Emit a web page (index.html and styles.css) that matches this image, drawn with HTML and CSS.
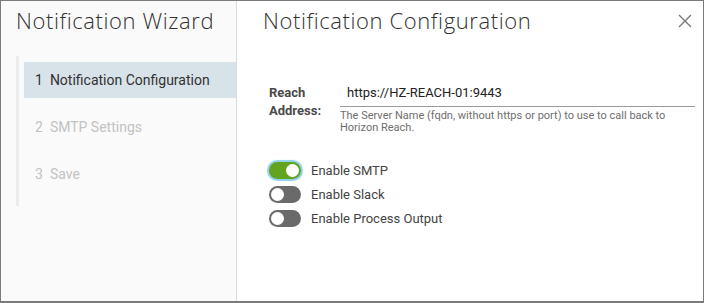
FILE: index.html
```html
<!DOCTYPE html>
<html lang="en">
<head>
  <meta charset="UTF-8">
  <title>Notification Wizard</title>
  <link rel="stylesheet" href="styles.css">
</head>
<body>

<div class="wizard">
  <div class="side">
    <h2 class="side-title">Notification Wizard</h2>
    <div class="steps">
      <div class="step active"><span class="num">1</span>Notification Configuration</div>
      <div class="step"><span class="num">2</span>SMTP Settings</div>
      <div class="step"><span class="num">3</span>Save</div>
    </div>
  </div>

  <div class="main">
    <div class="main-head">
      <h2 class="main-title">Notification Configuration</h2>
      <button class="close" aria-label="Close">
        <svg width="14" height="14" viewBox="0 0 14 14">
          <path d="M1 1 L13 13 M13 1 L1 13" stroke="#777" stroke-width="1.4" fill="none"/>
        </svg>
      </button>
    </div>

    <div class="field">
      <label class="field-label">Reach Address:</label>
      <div class="field-body">
        <input type="text" class="text-input" value="https://HZ-REACH-01:9443" />
        <div class="helper">The Server Name (fqdn, without https or port) to use to call back to Horizon Reach.</div>
      </div>
    </div>

    <div class="toggles">
      <div class="toggle-row"><span class="toggle on focus"></span>Enable SMTP</div>
      <div class="toggle-row"><span class="toggle"></span>Enable Slack</div>
      <div class="toggle-row"><span class="toggle"></span>Enable Process Output</div>
    </div>
  </div>
</div>

</body>
</html>
```

FILE: styles.css
```css
body {
  margin: 0;
  font-family: Roboto, "Liberation Sans", sans-serif;
  background: #fff;
}
.wizard {
  width: 704px;
  height: 303px;
  box-sizing: border-box;
  border: 1px solid #7b7b7b;
  border-bottom-width: 2px;
  display: flex;
}
.side {
  width: 235px;
  background: #fafafa;
  border-right: 1px solid #dcdcdc;
}
.side-title, .main-title {
  margin: 0;
  font-family: "Open Sans", sans-serif;
  font-weight: 300;
  font-size: 22px;
  letter-spacing: 0.6px;
  color: #313131;
  line-height: 26px;
}
.side-title {
  padding: 6px 0 0 15px;
}
.steps {
  margin: 23px 0 0 15px;
  border-left: 3px solid #ececec;
  padding: 6px 0 14px 5px;
}
.step {
  height: 36px;
  line-height: 36px;
  padding-left: 11px;
  margin-bottom: 11px;
  font-size: 14px;
  color: #c2c2c2;
}
.step:last-child { margin-bottom: 0; }
.step .num { margin-right: 7px; }
.step.active {
  background: #d8e3e9;
  color: #313131;
}
.main {
  flex: 1;
  padding: 0 0 0 26px;
}
.main-head {
  display: flex;
  justify-content: space-between;
  align-items: flex-start;
}
.main-title {
  padding-top: 6px;
}
.close {
  border: none;
  background: none;
  padding: 0;
  margin: 13px 11px 0 0;
  width: 14px;
  height: 14px;
  cursor: pointer;
}
.field {
  display: flex;
  margin: 51px 0 0 6px;
}
.field-label {
  width: 71px;
  font-size: 13px;
  font-weight: bold;
  color: #4a4a4a;
  line-height: 18px;
}
.field-body {
  flex: 1;
  margin-right: 8px;
}
.text-input {
  display: block;
  width: 100%;
  box-sizing: border-box;
  border: none;
  border-bottom: 1px solid #9a9a9a;
  padding: 0 0 5px 7px;
  font-family: Roboto, sans-serif;
  font-size: 13px;
  color: #222;
  height: 23px;
  outline: none;
}
.helper {
  font-size: 11px;
  color: #6e6e6e;
  line-height: 12px;
  margin-top: 3px;
}
.toggles {
  margin: 24px 0 0 6px;
}
.toggle-row {
  display: flex;
  align-items: center;
  height: 24px;
  font-size: 13px;
  color: #444;
}
.toggle {
  position: relative;
  width: 32px;
  height: 17px;
  border-radius: 9px;
  background: #6a6a6a;
  margin-right: 10px;
}
.toggle::after {
  content: "";
  position: absolute;
  top: 2px;
  left: 2px;
  width: 13px;
  height: 13px;
  border-radius: 50%;
  background: #fff;
}
.toggle.on { background: #62a420; }
.toggle.on::after { left: 17px; }
.toggle.focus { box-shadow: 0 0 1px 2px #8fd0ee; }
```
